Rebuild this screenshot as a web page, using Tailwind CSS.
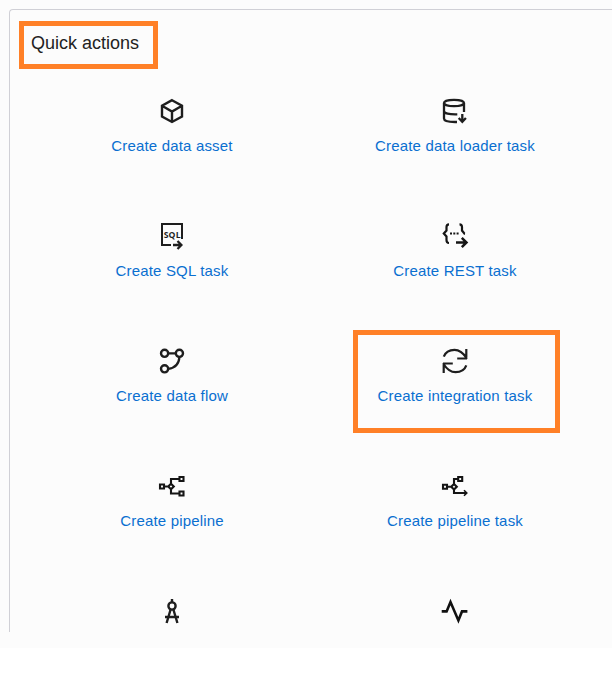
<!DOCTYPE html>
<html lang="en">
<head>
<meta charset="utf-8">
<title>Quick actions</title>
<script src="https://cdn.jsdelivr.net/npm/@tailwindcss/browser@4"></script>
</head>
<body class="bg-white font-['Liberation_Sans',Arial,sans-serif] overflow-hidden">
<main class="relative h-[648px] w-[612px] bg-[#fcfcfc] pt-[9px] pl-[9px] overflow-hidden">
  <section class="h-[623px] rounded-tl-[4px] border-t border-l border-[#d0d0d6]">
    <div class="pt-[11px] pl-[9px]">
      <h1 class="flex h-12 w-[139px] items-center border-[5px] border-[#ff8027] pb-[4px] pl-[7px] text-[18px] leading-5 whitespace-nowrap text-[#222]">Quick actions</h1>
    </div>
    <div class="mt-[21px] ml-[20px] grid w-[566px] grid-cols-2 auto-rows-[125px] text-center text-[15px] leading-5 tracking-[0.17px] text-[#0a6fd0]">
      <a class="flex flex-col items-center">
        <svg class="h-10 w-[63px]" viewBox="0 0 63 40" fill="none" stroke="#1e1e1e" stroke-width="2.4"><path d="M32 10.2 42 15.8V26.5L32 32 22 26.5V15.8ZM22 15.8 32 21.5 42 15.8M32 21.5V32"/></svg>
        <span class="mt-[6px] pl-px">Create data asset</span>
      </a>
      <a class="flex flex-col items-center">
        <svg class="h-10 w-[63px]" viewBox="-1 0 63 40" fill="none" stroke="#1e1e1e" stroke-width="2.3"><ellipse cx="30" cy="13" rx="10" ry="3.2"/><path d="M20 13V28.5C20 30.7 24 32 31 32H33M40 13V22M20 21C20 23.5 25 24.5 33.3 24.3M38.3 24V31M34.7 28 38.3 31.8 41.9 28"/></svg>
        <span class="mt-[6px] pl-px">Create data loader task</span>
      </a>
      <a class="flex flex-col items-center">
        <svg class="h-10 w-[63px]" viewBox="0 0 63 40" fill="none" stroke="#1e1e1e" stroke-width="2"><path d="M31 30H22V9H42V24"/><path d="M33 30H41M37.5 26 41.4 30 37.5 34" stroke-width="2.3"/><text x="32.2" y="22.6" text-anchor="middle" font-family="Open Sans" font-size="9.6" font-weight="700" fill="#1e1e1e" stroke="none" textLength="17" lengthAdjust="spacingAndGlyphs">SQL</text></svg>
        <span class="mt-[6px] pl-px">Create SQL task</span>
      </a>
      <a class="flex flex-col items-center">
        <svg class="h-10 w-[63px]" viewBox="-1 0 63 40" fill="none" stroke="#151515" stroke-width="2.2"><path d="M25 9.3C22.8 9.3 22.5 10.2 22.5 12V15.5L19.8 18.5 22.5 21.5V25C22.5 27 23 28 25 28M35.5 9.3C37.7 9.3 38 10.2 38 12V15.5L40.5 18.7H41"/><path d="M32 27.5H42.5M37.8 22.8 42.5 27.5 37.8 32.2" stroke-width="2.5"/><path d="M26 18.5H28M29.3 18.5H31.3M32.6 18.5H34.6" stroke-width="2"/></svg>
        <span class="mt-[6px] pl-px">Create REST task</span>
      </a>
      <a class="flex flex-col items-center">
        <svg class="h-10 w-[63px]" viewBox="0 0 63 40" fill="none" stroke="#1e1e1e" stroke-width="2.4"><circle cx="24.6" cy="13.3" r="3.6"/><circle cx="39.4" cy="13.3" r="3.6"/><circle cx="24.6" cy="28.8" r="3.6"/><path d="M28.2 13.3H35.8M39.4 17C39 23.8 35 28 28.2 28.8" stroke-width="2.3"/></svg>
        <span class="mt-[6px] pl-px">Create data flow</span>
      </a>
      <a class="relative flex flex-col items-center">
        <i class="absolute -top-[10px] left-[40px] h-[103px] w-[207px] border-[5px] border-[#ff8027]"></i>
        <svg class="h-10 w-[63px]" viewBox="-1 0 63 40" fill="none" stroke="#1e1e1e" stroke-width="2.2"><path d="M19.8 16.6C21.4 12.2 25.8 9.8 30.5 9.8 35.4 9.8 39 12.5 42.5 18M33.2 18.5H43M42.3 9V19M42.3 25.4C40.7 29.8 36.3 32.2 31.6 32.2 26.7 32.2 23 29.5 19.5 24M28.8 23.5H19M19.7 33V23"/></svg>
        <span class="mt-[6px] pl-px">Create integration task</span>
      </a>
      <a class="flex flex-col items-center">
        <svg class="h-10 w-[63px]" viewBox="0 0 63 40" fill="none" stroke="#151515" stroke-width="2.1"><path d="M20 19.5H24V23.5H20ZM39.5 12H43.5V16H39.5ZM39.5 26.5H43.5V30.5H39.5ZM25 21.5H28M39 14H31V18.8M31 24.2V28.5H39M31 18.7 33.8 21.5 31 24.3 28.2 21.5Z"/></svg>
        <span class="mt-[6px] pl-px">Create pipeline</span>
      </a>
      <a class="flex flex-col items-center">
        <svg class="h-10 w-[63px]" viewBox="-1 0 63 40" fill="none" stroke="#151515" stroke-width="2.1"><path d="M19 19.8H23V23.8H19ZM34.2 12H38.2V16H34.2ZM24 21.7H27M34 14H30V19M30 24.2V28H42.6M30 18.9 32.8 21.7 30 24.5 27.2 21.7Z"/><path d="M40 25.2 42.8 28 40 30.8" stroke-width="1.6"/></svg>
        <span class="mt-[6px] pl-px">Create pipeline task</span>
      </a>
      <a class="flex flex-col items-center">
        <svg class="h-10 w-[63px]" viewBox="0 0 63 40" fill="none" stroke="#1e1e1e" stroke-width="2.4"><circle cx="32" cy="16" r="3.6"/><path d="M32 9V12.4M30.6 19.5 26.6 33M33.4 19.5 37.4 33M25 27H39"/></svg>
      </a>
      <a class="flex flex-col items-center">
        <svg class="h-10 w-[63px]" viewBox="-1 0 63 40" fill="none" stroke="#111" stroke-width="2.6" stroke-miterlimit="10"><path d="M17.7 21.4H22.6L26.5 12 34.4 30.4 38 21.4H43.4"/></svg>
      </a>
    </div>
  </section>
</main>
</body>
</html>
